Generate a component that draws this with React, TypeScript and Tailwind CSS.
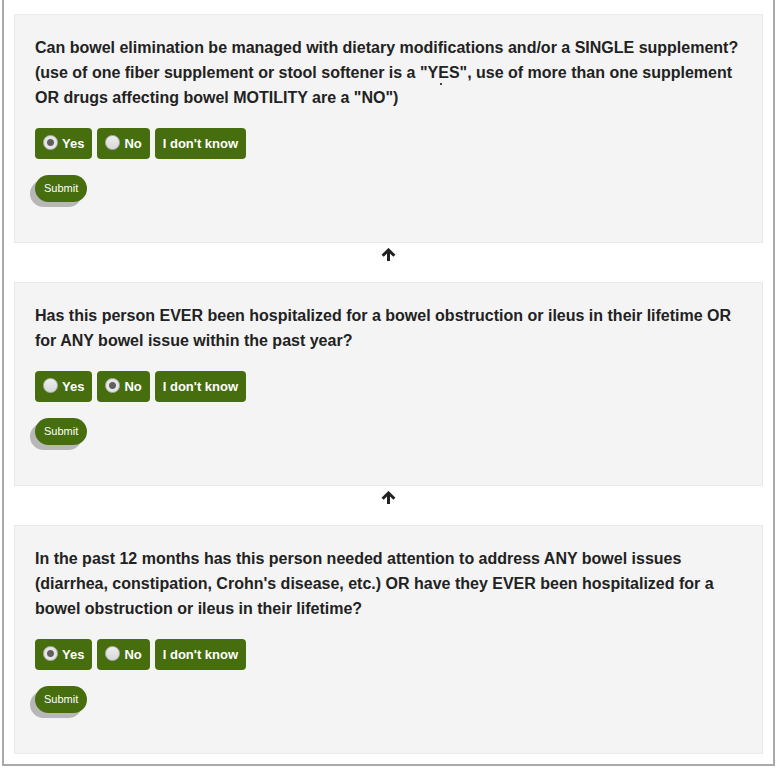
import { Fragment, type ReactNode } from "react";

type Answer = "yes" | "no";

type Question = {
  id: string;
  text: ReactNode;
  answer: Answer;
};

const questions: Question[] = [
  {
    id: "managed",
    text: (
      <>
        Can bowel elimination be managed with dietary modifications and/or a SINGLE supplement? (use of one fiber
        supplement or stool softener is a{" "}
        <span className="relative after:absolute after:-bottom-1 after:left-5 after:size-0.5 after:bg-[#444] after:content-['']">
          "YES"
        </span>
        , use of more than one supplement OR drugs affecting bowel MOTILITY are a "NO")
      </>
    ),
    answer: "yes",
  },
  {
    id: "hospitalized",
    text: "Has this person EVER been hospitalized for a bowel obstruction or ileus in their lifetime OR for ANY bowel issue within the past year?",
    answer: "no",
  },
  {
    id: "attention",
    text: "In the past 12 months has this person needed attention to address ANY bowel issues (diarrhea, constipation, Crohn's disease, etc.) OR have they EVER been hospitalized for a bowel obstruction or ileus in their lifetime?",
    answer: "yes",
  },
];

const pill = "flex h-[31px] items-center rounded bg-[#466e0f] px-2 text-[13px] font-bold text-white";

function Choice({ name, value, label, checked }: { name: string; value: Answer; label: string; checked: boolean }) {
  const id = `${name}-${value}`;
  return (
    <label htmlFor={id} className={`${pill} gap-1`}>
      <input
        id={id}
        type="radio"
        name={name}
        value={value}
        defaultChecked={checked}
        className="mb-0.5 size-[15px] appearance-none rounded-full border border-[#b4b4b4] bg-linear-to-b from-[#eeeeee] to-[#d8d8d8] checked:bg-[radial-gradient(circle,#606060_0,#606060_3px,#e6e6e6_4px)]"
      />
      {label}
    </label>
  );
}

function QuestionCard({ question }: { question: Question }) {
  return (
    <form
      className="border border-[#e9e9e9] bg-[#f4f4f4] px-5 pt-5 pb-10"
      onSubmit={(event) => event.preventDefault()}
    >
      <fieldset>
        <legend className="text-base/[25px] font-bold">{question.text}</legend>
        <div className="mt-[18px] flex flex-wrap gap-[5px]">
          <Choice name={question.id} value="yes" label="Yes" checked={question.answer === "yes"} />
          <Choice name={question.id} value="no" label="No" checked={question.answer === "no"} />
          <button type="button" className={pill}>
            I don't know
          </button>
        </div>
      </fieldset>
      <button
        type="submit"
        className="mt-4 block h-[27px] rounded-full bg-[#466e0f] px-[9px] text-[11px] text-white shadow-[-5px_5px_0_#b7b7b7]"
      >
        Submit
      </button>
    </form>
  );
}

function UpArrow() {
  return (
    <div className="flex h-[39px] justify-center pt-[5px]">
      <svg viewBox="0 0 16 14" className="h-[14px] w-4" fill="none" stroke="currentColor" strokeWidth="3" aria-hidden="true">
        <path d="M7.5 13V2.5M1.6 7.8L7.5 2L13.4 7.8" />
      </svg>
    </div>
  );
}

export default function App() {
  return (
    <main className="mr-px mb-[3px] ml-0.5 border-x-2 border-b-2 border-[#a9a9a9] bg-white px-2.5 pt-3.5 pb-2.5 font-['Liberation_Sans',Arial,sans-serif] text-[#222]">
      {questions.map((question, index) => (
        <Fragment key={question.id}>
          {index > 0 && <UpArrow />}
          <QuestionCard question={question} />
        </Fragment>
      ))}
    </main>
  );
}
